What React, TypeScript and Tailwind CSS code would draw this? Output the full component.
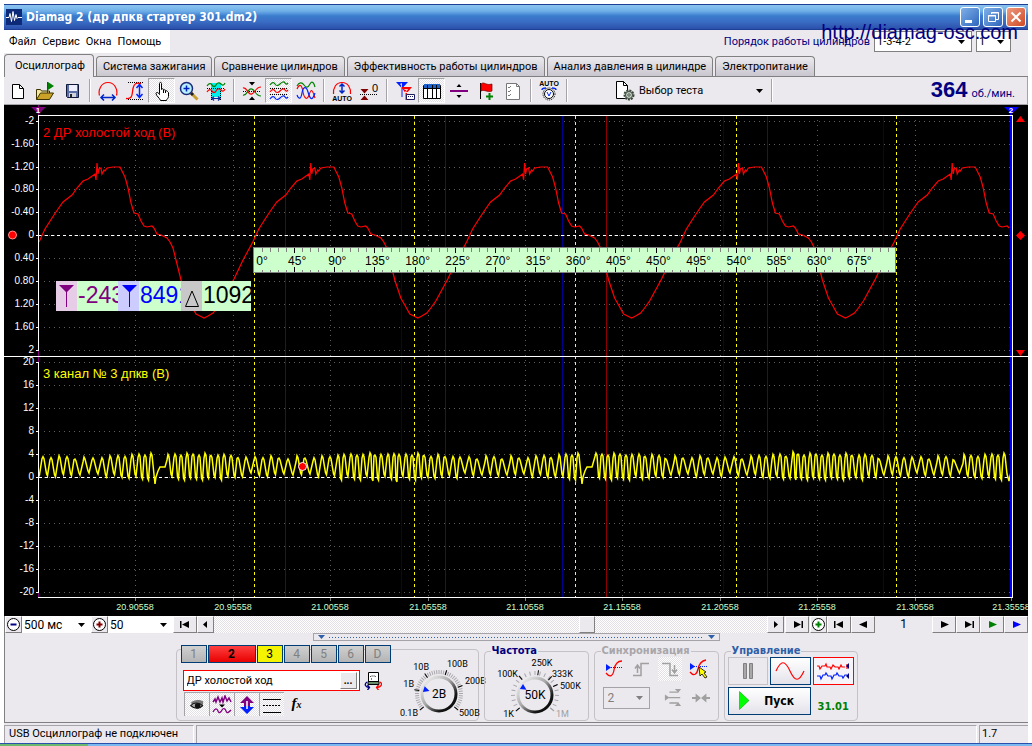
import { useState } from 'react';
import type { ReactNode } from 'react';
import clsx from 'clsx';

const DITHER = 'bg-[repeating-conic-gradient(#ffffff_0_25%,#e2e0e4_0_50%)] bg-[length:2px_2px]';
const BOLD = "font-['DejaVu_Sans_Condensed','DejaVu_Sans',sans-serif] font-bold";

const TABS = [
  'Осциллограф',
  'Система зажигания',
  'Сравнение цилиндров',
  'Эффективность работы цилиндров',
  'Анализ давления в цилиндре',
  'Электропитание',
];

/* ---------- toolbar icons ---------- */

function Icon({ children, className = 'size-5' }: { children: ReactNode; className?: string }) {
  return (
    <svg viewBox="0 0 20 20" className={clsx('shrink-0', className)} fill="none" aria-hidden="true">
      {children}
    </svg>
  );
}

const NewIcon = () => (
  <Icon>
    <path d="M4.500 3.500h7l4 4v10h-11z" fill="#fff" stroke="#000" />
    <path d="M11.500 3.500v4h4" stroke="#000" />
  </Icon>
);

const OpenIcon = () => (
  <Icon>
    <path d="M1.500 18.500v-10h4l1 1.500h8v3" fill="#f5e6a0" stroke="#3a3200" />
    <path d="M1.500 18.500l4-6.500h13l-4 6.500z" fill="#c9a227" stroke="#3a3200" />
    <path d="M12.500 12V1" stroke="#006400" />
    <path d="M13 1l6 4-6 4z" fill="#008000" />
  </Icon>
);

const SaveIcon = () => (
  <Icon>
    <path d="M4.500 3.500h12v13h-11l-1-1z" fill="#5a6ea5" stroke="#10183a" />
    <path d="M7 4h8v6H7z" fill="#eef" />
    <path d="M7 12h7v4H7z" fill="#cfd3dd" />
    <path d="M8 13h2v3H8z" fill="#222" />
  </Icon>
);

const WidthIcon = () => (
  <Icon>
    <path d="M1.500 14.500C0 9 3 1.500 10 1.500S20 9 18.500 14.500" stroke="#f00" strokeWidth="1.200" />
    <path d="M3 16.500h14M6 13.500l-3 3 3 3M14 13.500l3 3-3 3" stroke="#0026c8" strokeWidth="1.500" />
  </Icon>
);

const HeightIcon = () => (
  <Icon>
    <path d="M3 1.500h16M3 18.500h16" stroke="#000" strokeDasharray="1 1" />
    <path d="M1 17.500c7 1 6-5 7-10s3-6 8-5" stroke="#f00" strokeWidth="1.300" />
    <path d="M14.500 4v12M11.500 7l3-3.500 3 3.500M11.500 13l3 3.500 3-3.500" stroke="#0026ff" strokeWidth="1.500" />
  </Icon>
);

const HandIcon = () => (
  <Icon>
    <path
      d="M7.500 12.500v-10c0-1.500 2-1.500 2 0v6c0-1 2-1 2 0v1c0-1 2-1 2 0v1c0-1 2-1 2 0l1 1v4c0 2-2 2.500-2 4H8.500c-1-3-4-4-4.500-7 0-1.500 2-1.500 3.500 1z"
      fill="#fff"
      stroke="#000"
    />
    <path d="M11.500 9v3M13.500 10v2" stroke="#000" />
  </Icon>
);

const ZoomIcon = () => (
  <Icon>
    <path d="M12 12l6.500 6.500" stroke="#c8a030" strokeWidth="3" />
    <path d="M12 12l2 2" stroke="#222" strokeWidth="3" />
    <circle cx="7.500" cy="7.500" r="6" fill="#b8f0ff" stroke="#1a2a78" strokeWidth="1.500" />
    <path d="M4.500 7.500h6M7.500 4.500v6" stroke="#0020c0" strokeWidth="1.500" />
  </Icon>
);

const SpanIcon = () => (
  <Icon>
    <path d="M5 2h10v14H5z" fill="#00f0f0" />
    <path d="M1 7.500h18M5.500 10v9M14.500 10v9" stroke="#000" strokeDasharray="1 1" />
    <path d="M1 5c2-3 4-3 5-1s3 2 4 0 3-3 5-1 3 1 4-1" stroke="#008000" strokeWidth="1.300" />
    <path d="M1 11c2-3 4-3 5-1s3 2 4 0 3-3 5-1 3 1 4-1" stroke="#f00" strokeWidth="1.300" />
    <path d="M6 17.500h8M8 15.500l-2 2 2 2M12 15.500l2 2-2 2" stroke="#0026a0" strokeWidth="1.200" />
  </Icon>
);

const CenterIcon = () => (
  <Icon>
    <path d="M1 10.500h18" stroke="#000" strokeDasharray="1 1" />
    <path d="M7 1h6l-3 3.500zM7 19h6l-3-3.500z" fill="#000" />
    <path d="M1 14c3 1 4-3 6-5s4-1 6 2 3 4 6 4" stroke="#008000" strokeWidth="1.200" />
    <path d="M1 7c3-1 4 3 6 5s4 1 6-2 3-4 6-4" stroke="#f00" strokeWidth="1.200" />
  </Icon>
);

const LanesIcon = () => (
  <Icon>
    <path d="M1 4c2-3 4-3 5-1s3 2 5 0 4-3 5-1 2 1 3 0" stroke="#008000" strokeWidth="1.200" />
    <path d="M1 7.500h18M1 13.500h18" stroke="#000" strokeDasharray="1 1" />
    <path d="M1 11c2-3 4-3 5-1s3 2 5 0 4-3 5-1 2 1 3 0" stroke="#f00" strokeWidth="1.200" />
    <path d="M1 18c2-3 4-3 5-1s3 2 5 0 4-3 5-1 2 1 3 0" stroke="#0026ff" strokeWidth="1.200" />
  </Icon>
);

const OverlayIcon = () => (
  <Icon>
    <path d="M1 5c2-4 5-4 7-1s4 3 6-1 4-1 5 3" stroke="#008000" strokeWidth="1.200" />
    <path d="M1 8c3-7 5-3 6 3s4 9 6 3 3-7 6 3" stroke="#f00" strokeWidth="1.200" />
    <path d="M1 14c2 5 4 4 5-2s4-8 6-1 4 10 7 1" stroke="#0026ff" strokeWidth="1.200" />
  </Icon>
);

const AutoScaleIcon = () => (
  <Icon>
    <path d="M1.500 13C1 7 4 1.500 10 1.500S19 7 18.500 13" stroke="#f00" strokeWidth="1.200" />
    <path d="M10 3v9M7.500 5.500L10 3l2.500 2.500M7.500 9.500L10 12l2.500-2.500" stroke="#0026c8" strokeWidth="1.500" />
    <text x="10" y="19.500" textAnchor="middle" fill="#000" className="font-['Liberation_Sans'] text-[7px] font-bold">
      AUTO
    </text>
  </Icon>
);

const ZeroIcon = () => (
  <Icon>
    <path d="M1 13.500h18" stroke="#000" strokeDasharray="1 1" />
    <path d="M1.500 8h8l-4 4.500zM1.500 19h8l-4-4.500z" fill="#800000" />
    <text x="13" y="11" fill="#000" className="font-['Liberation_Sans'] text-[11px]">
      0
    </text>
  </Icon>
);

const CursorsIcon = () => (
  <Icon>
    <path d="M1 1h12L7.500 7v9h-1V7z" fill="#0020ff" />
    <path d="M6 6h11l-5 6v7h-1.500v-7z" fill="#f00" />
    <path d="M5 3.500l1.500-1v4M9.500 8.500h3l-2.500 3h3" stroke="#fff" strokeWidth="0.800" />
    <path d="M11.500 13.500h8v5h-8z" fill="#fff" stroke="#1a1a60" />
    <path d="M13 15.500h5" stroke="#1a1a60" strokeDasharray="1 1" />
  </Icon>
);

const TableIcon = () => (
  <Icon>
    <path d="M1.500 4.500h17v13h-17z" fill="#fff" stroke="#000" />
    <path d="M2 3h16v4H2z" fill="#1c62c8" />
    <path d="M1.500 7.500h17M5.500 4v14M10.500 4v14M14.500 4v14" stroke="#000" />
  </Icon>
);

const SplitIcon = () => (
  <Icon>
    <path d="M1 10h18" stroke="#800080" strokeWidth="2" />
    <path d="M7.500 6h5L10 3zM7.500 14h5L10 17z" fill="#000" />
  </Icon>
);

const FlagIcon = () => (
  <Icon>
    <path d="M4.500 2v16" stroke="#000" />
    <path d="M5 3c3-3 5 2 11 0v7c-5 2-7-2-11 0z" fill="#f00" stroke="#7a0000" strokeWidth="0.700" />
    <path d="M13.500 12v7M10 15.500h7" stroke="#008000" strokeWidth="2" />
  </Icon>
);

const ChecklistIcon = () => (
  <Icon>
    <path d="M3.500 2.500h10l3 3v13h-13z" fill="#fff" stroke="#777" />
    <path d="M5 6l1 1 2-2M5 10l1 1 2-2M5 14l1 1 2-2" stroke="#777" />
    <path d="M13.500 2.500v3h3" stroke="#777" />
  </Icon>
);

const AutoKnobIcon = () => (
  <Icon>
    <text x="10" y="5" textAnchor="middle" fill="#000" className="font-['Liberation_Sans'] text-[7px] font-bold">
      AUTO
    </text>
    <path d="M3 9c0-2 2-2 4-2M17 9c0-2-2-2-4-2" stroke="#0026ff" strokeWidth="1.500" />
    <circle cx="10" cy="13" r="6" stroke="#000" strokeDasharray="1 1" />
    <circle cx="10" cy="13" r="4.500" fill="#fff" stroke="#000" />
    <path d="M8 11l2 4 2-4" stroke="#0026ff" />
  </Icon>
);

const TestIcon = () => (
  <Icon className="size-5">
    <path d="M1.500 .500h7l4 4v13h-11z" fill="#fff" stroke="#000" />
    <path d="M8.500 .500v4h4" stroke="#000" />
    <circle cx="14" cy="14" r="4.500" fill="#b8c4b8" stroke="#3c4a3c" strokeWidth="2" strokeDasharray="2 1" />
    <circle cx="14" cy="14" r="3.500" fill="#c8d2c8" stroke="#3c4a3c" />
    <circle cx="14" cy="14" r="1.200" fill="#fff" stroke="#3c4a3c" />
  </Icon>
);

type Tool = { label: string; icon: ReactNode; pressed?: boolean };

const TOOL_GROUPS: Tool[][] = [
  [
    { label: 'Новый', icon: <NewIcon /> },
    { label: 'Открыть', icon: <OpenIcon /> },
    { label: 'Сохранить', icon: <SaveIcon /> },
  ],
  [
    { label: 'Масштаб по ширине', icon: <WidthIcon /> },
    { label: 'Масштаб по высоте', icon: <HeightIcon /> },
    { label: 'Перемещение', icon: <HandIcon />, pressed: true },
    { label: 'Лупа', icon: <ZoomIcon /> },
    { label: 'Интервал', icon: <SpanIcon /> },
  ],
  [
    { label: 'По центру', icon: <CenterIcon /> },
    { label: 'Раздельно', icon: <LanesIcon />, pressed: true },
    { label: 'Наложение', icon: <OverlayIcon /> },
  ],
  [
    { label: 'Автомасштаб', icon: <AutoScaleIcon /> },
    { label: 'Обнуление', icon: <ZeroIcon /> },
  ],
  [
    { label: 'Маркеры', icon: <CursorsIcon /> },
    { label: 'Таблица', icon: <TableIcon />, pressed: true },
    { label: 'Разделитель', icon: <SplitIcon /> },
    { label: 'Добавить флаг', icon: <FlagIcon /> },
    { label: 'Список', icon: <ChecklistIcon /> },
  ],
  [{ label: 'Автонастройка', icon: <AutoKnobIcon /> }],
];

const Separator = () => (
  <div className="flex w-[9px] shrink-0 justify-center py-px">
    <div className="w-0.5 border-r border-l border-r-white border-l-[#a5a3a8]" />
  </div>
);

/* ---------- header ---------- */

function TitleBar() {
  const winButton = 'flex size-5 items-center justify-center rounded-[3px] border border-white';
  return (
    <header className="flex h-[26px] items-center border-t border-b border-[#1d3f96] bg-[linear-gradient(#8cc4f0_0%,#6fb0e8_25%,#5797de_35%,#3b7dcd_45%,#3a6cc4_70%,#2b50ab_100%)] px-0.5">
      <svg viewBox="0 0 16 16" className="size-4 shrink-0" aria-hidden="true">
        <path d="M0 0h16v16H0z" fill="#0c2a78" />
        <path d="M0 8.500h3l1-4 1.500 8 1.500-10 1.500 9 1.500-6 1 4 1-1h4" fill="none" stroke="#fff" />
      </svg>
      <h1 className={clsx(BOLD, 'ml-1 flex-1 text-[12px] leading-5 text-white')}>Diamag 2 (др дпкв стартер 301.dm2)</h1>
      <div className="flex gap-[3px]">
        <button type="button" aria-label="Свернуть" className={clsx(winButton, 'bg-[linear-gradient(135deg,#7fb0e8,#2f66bd)]')}>
          <svg viewBox="0 0 16 16" className="size-4">
            <path d="M3 11h7v3H3z" fill="#fff" />
          </svg>
        </button>
        <button type="button" aria-label="Развернуть" className={clsx(winButton, 'bg-[linear-gradient(135deg,#7fb0e8,#2f66bd)]')}>
          <svg viewBox="0 0 16 16" className="size-4" fill="none" stroke="#fff">
            <path d="M6.500 5V3.500h7v7H11M6 4h8M3.500 6.500h7v6h-7zM3 7h8" />
          </svg>
        </button>
        <button type="button" aria-label="Закрыть" className={clsx(winButton, 'bg-[linear-gradient(135deg,#f09a80,#cf4a24)]')}>
          <svg viewBox="0 0 16 16" className="size-4" stroke="#fff" strokeWidth="2">
            <path d="M3.500 3.500l9 9M12.500 3.500l-9 9" />
          </svg>
        </button>
      </div>
    </header>
  );
}

function DropDown({ label, options, className, arrow = 'right-1.5' }: { label: string; options: string[]; className?: string; arrow?: string }) {
  return (
    <span className={clsx('relative flex items-center', className)}>
      <select aria-label={label} className="h-full w-full appearance-none bg-transparent pl-0.5 leading-4 outline-none">
        {options.map((o) => (
          <option key={o}>{o}</option>
        ))}
      </select>
      <svg viewBox="0 0 7 4" className={clsx('pointer-events-none absolute h-1 w-[7px]', arrow)} fill="currentColor" aria-hidden="true">
        <path d="M0 0h7L3.500 4z" />
      </svg>
    </span>
  );
}

function MenuBar() {
  return (
    <div className="relative flex h-[23px] items-center justify-between">
      <nav className="flex h-full w-[166px] items-center gap-1.5 bg-white pl-[5px]">
        {['Файл', 'Сервис', 'Окна', 'Помощь'].map((item) => (
          <button key={item} type="button">
            {item}
          </button>
        ))}
      </nav>
      <div className="flex items-center gap-1 pr-[17px]">
        <span className="text-[#000080]">Порядок работы цилиндров</span>
        <DropDown label="Порядок работы цилиндров" options={['1-3-4-2', '1-2-4-3']} className="h-[21px] w-[98px] border border-[#808080] bg-white" />
        <DropDown label="Цилиндр" options={['1', '2', '3', '4']} className="h-[21px] w-[35px] border border-[#808080] bg-white" />
      </div>
      <a
        href="http://diamag-osc.com"
        className="absolute -top-2.5 right-2.5 font-['Liberation_Sans',sans-serif] text-[20px] leading-6 text-[#000080]"
      >
        http://diamag-osc.com
      </a>
    </div>
  );
}

function TabBar() {
  const [active, setActive] = useState(TABS[0]);
  return (
    <div role="tablist" className="flex h-6 items-end gap-0.5 border-b border-[#808080]">
      {TABS.map((tab) => (
        <button
          key={tab}
          type="button"
          role="tab"
          aria-selected={tab === active}
          onClick={() => setActive(tab)}
          className={clsx(
            'rounded-t-[4px] border border-b-0 border-[#808080] whitespace-nowrap',
            tab === active ? '-mb-px h-[23px] bg-[#ebe9ed] pr-2 pl-2.5' : 'h-5 bg-[linear-gradient(#eceaee,#c9c6cf)] px-1.5',
          )}
        >
          {tab}
        </button>
      ))}
    </div>
  );
}

function Toolbar() {
  return (
    <div className="flex h-7 items-stretch border-r border-b border-[#a5a3a8] pt-px pb-px">
      {TOOL_GROUPS.map((group, i) => (
        <div key={i} className="flex">
          {group.map((tool) => (
            <button
              key={tool.label}
              type="button"
              aria-label={tool.label}
              className={clsx(
                'flex w-[27px] items-center justify-center',
                tool.pressed && ['border-t border-r border-b border-l border-[#a5a3a8] border-r-white border-b-white', DITHER],
              )}
            >
              {tool.icon}
            </button>
          ))}
          <Separator />
        </div>
      ))}
      <button type="button" className="ml-11 flex w-[152px] items-center gap-1">
        <TestIcon />
        <span className="flex-1 text-left">Выбор теста</span>
        <svg viewBox="0 0 7 4" className="mr-1 h-1 w-[7px]" aria-hidden="true">
          <path d="M0 0h7L3.500 4z" />
        </svg>
      </button>
      <Separator />
      <div className="flex flex-1 items-baseline justify-end gap-1 pr-3 text-[#000080]">
        <strong className="font-['Liberation_Sans',sans-serif] text-[22px] leading-6">364</strong>
        <span>об./мин.</span>
      </div>
    </div>
  );
}

/* ---------- scope screen ---------- */

const UPPER = [
  ['-2', 121], ['-1.60', 144], ['-1.20', 167], ['-0.80', 189], ['-0.40', 212], ['0', 235],
  ['0.40', 258], ['0.80', 281], ['1.20', 304], ['1.60', 327], ['2', 350],
] as const;

const LOWER = [
  ['20', 362], ['16', 385], ['12', 408], ['8', 431], ['4', 454], ['0', 477],
  ['-4', 500], ['-8', 523], ['-12', 546], ['-16', 569], ['-20', 592],
] as const;

const TIMES = [
  ['20.90558', 135], ['20.95558', 233], ['21.00558', 330], ['21.05558', 428], ['21.10558', 525],
  ['21.15558', 622], ['21.20558', 720], ['21.25558', 817], ['21.30558', 915], ['21.35558', 1011],
] as const;

// one engine cycle of the pressure sensor, repeated every CYCLE units
const CYCLE = 213.8;
const PRESSURE = [
  [39, 242], [45, 229], [52, 218], [58, 209], [63, 202], [72, 195], [77, 188], [83, 181], [88, 179], [95, 174],
  [96, 180], [97, 163], [98, 174], [99, 169], [101, 168], [102, 174], [104, 170], [105, 171], [107, 168], [113, 167],
  [120, 167], [122, 171], [125, 177], [128, 188], [131, 203], [134, 213], [138, 214], [141, 221], [144, 226],
  [147, 227], [152, 226], [154, 228], [157, 234], [161, 235], [167, 238], [170, 242], [173, 248], [176, 260],
  [181, 280], [184, 289], [187, 298], [191, 305], [196, 314], [200, 316], [204, 318], [208, 316], [213, 313],
  [217, 308], [222, 301], [228, 290], [234, 279], [243, 260],
];

const pressurePoints = [0, 1, 2, 3, 4]
  .flatMap((n) => PRESSURE.map(([x, y]) => [x + n * CYCLE, y]))
  .filter(([x]) => x <= 1011)
  .map(([x, y]) => `${x.toFixed(1)},${y}`)
  .join(' ');

// crankshaft sensor tooth peaks, split where the disc has its missing teeth
const TEETH = [
  [35, 43, 51, 59, 67, 75, 84, 93, 102, 110, 118, 125, 132, 139, 145, 151],
  [
    168, 175, 181, 187, 193, 199, 205, 211, 218, 224, 231, 238, 246, 255, 263, 271, 279, 288, 297, 305, 314, 322, 330,
    338, 344, 351, 357, 363, 370, 375, 381, 388, 394, 399, 406, 412, 418, 424, 431, 438, 445, 453, 460, 469, 477, 486,
    494, 502, 511, 519, 528, 536, 544, 551, 559, 566, 572, 578,
  ],
  [
    596, 602, 608, 614, 620, 626, 632, 639, 645, 652, 659, 666, 675, 683, 692, 700, 708, 717, 725, 734, 742, 751, 759,
    766, 773, 780, 786, 793, 798, 804, 810, 816, 822, 828, 834, 840, 846, 852, 859, 865, 872, 879, 888, 896, 904, 912,
    921, 929, 938, 946, 954, 964, 971, 978, 985, 992, 998, 1004,
  ],
];

function crankPoints() {
  const points: string[] = [];
  TEETH.forEach((teeth, n) => {
    teeth.forEach((x, i) => {
      const next = teeth[i + 1];
      const d = next ? next - x : 6;
      const top = 457 - (9 - d) * 1.3 + (i % 3);
      const bottom = 474 + (9 - d) * 1.7 + ((i * 7) % 3) - 1;
      if (x > 38) points.push(`${x},${top.toFixed(1)}`, `${x + 1},${(top + 2).toFixed(1)}`);
      if (!next) return;
      points.push(`${x + d / 2 - 0.5},${(bottom - 2).toFixed(1)}`, `${x + d / 2 + 0.5},${bottom.toFixed(1)}`);
      points.push(`${x + d - 1},${(top + 3).toFixed(1)}`);
    });
    if (n < 2) {
      const g = teeth[teeth.length - 1] + 4;
      points.push(`${g},484`, `${g + 1},477`, `${g + 3},471`, `${g + 5},467`, `${g + 10},467`, `${g + 12},460`);
    }
  });
  points.push('1007,474', '1009,481', '1011,472');
  return points.join(' ');
}

const crank = crankPoints();

function Readout({ x, width, tint, value, color, children }: { x: number; width: number; tint: string; value: string; color: string; children: ReactNode }) {
  return (
    <svg x={x} y={281} width={width} height={30} className="overflow-hidden">
      <rect width={width} height={30} fill="#ccffcc" />
      <rect width={21} height={30} fill={tint} />
      {children}
      <text x={22} y={22} fill={color} className="text-[23px]">
        {value}
      </text>
    </svg>
  );
}

function AngleRuler() {
  const step = 40.15;
  const ticks = Array.from({ length: 80 }, (_, i) => i).filter((i) => i > 0);
  return (
    <g>
      <rect x={253.5} y={247.5} width={642} height={25} fill="#ccffcc" stroke="#808080" />
      {ticks.map((i) => {
        const x = Math.round(254 + (i * step) / 5) + 0.5;
        const major = i % 5 === 0;
        return x < 895 ? (
          <path key={i} d={major ? `M${x} 248v5M${x} 267v5` : `M${x} 248v4M${x} 270v2`} stroke={major ? '#000' : '#808080'} />
        ) : null;
      })}
      {Array.from({ length: 16 }, (_, i) => (
        <text key={i} x={i === 0 ? 262 : 257 + i * step} y={265} textAnchor="middle" fill="#000" className="text-[12px]">
          {i * 45}°
        </text>
      ))}
    </g>
  );
}

function Scope() {
  return (
    <svg viewBox="4 105 1024 511" className="block w-full bg-black font-['Liberation_Sans',sans-serif]" role="img" aria-label="Осциллограмма">
      <g stroke="#5c5c5c" strokeDasharray="1 4">
        {[...UPPER, ...LOWER].map(([label, y]) => (
          <path key={`${label}${y}`} d={`M44 ${y + 0.5}H1010`} />
        ))}
        {TIMES.slice(0, -1).map(([label, x]) => (
          <path key={label} d={`M${x + 0.5} 120V597`} />
        ))}
      </g>
      {[285, 445, 767].map((x) => (
        <path key={x} d={`M${x + 0.5} 116V598`} stroke="#600000" />
      ))}
      {[401, 723, 883].map((x) => (
        <path key={x} d={`M${x + 0.5} 116V598`} stroke="#000068" />
      ))}
      <path d="M606.500 116V598" stroke="#8c0000" />
      <path d="M562.500 116V598" stroke="#000090" />
      <path d="M39 235.500H1011M39 477.500H1011" stroke="#fff" strokeDasharray="3 3" />
      {[254, 414, 575, 736, 896].map((x) => (
        <path key={x} d={`M${x + 0.5} 116V598`} stroke="#ffff00" strokeDasharray="3 3" />
      ))}

      <polyline points={pressurePoints} fill="none" stroke="#ff0000" strokeWidth="1.200" />
      <polyline points={crank} fill="none" stroke="#ffff00" strokeWidth="1.500" />

      <path d="M38.500 105V598" stroke="#800080" />
      <path d="M1011 112V598" stroke="#0000ff" strokeWidth="2" />
      <path d="M38.500 115V350M38.500 362V592M39 115.500H1012M4 356.500H1028M38 597.500H1012M1012.500 115V598" stroke="#fff" />
      <g fill="#fff" className="text-[10px]">
        {[...UPPER, ...LOWER].map(([label, y]) => (
          <g key={`${label}${y}`}>
            <path d={`M36 ${y + 0.5}h3`} stroke="#fff" />
            <text x={34} y={y + 3} textAnchor="end">
              {label}
            </text>
          </g>
        ))}
      </g>
      <g fill="#ccffcc" className="text-[9px]">
        {TIMES.map(([label, x]) => (
          <g key={label}>
            <path d={`M${x + 0.5} 598v3`} stroke="#808080" />
            <text x={x} y={610} textAnchor="middle">
              {label}
            </text>
          </g>
        ))}
      </g>
      <text x={43} y={137} fill="#ff0000" className="text-[13px]">
        2 ДР холостой ход (В)
      </text>
      <text x={43} y={378} fill="#ffff00" className="text-[13px]">
        3 канал № 3 дпкв (В)
      </text>

      <path d="M31 107h15l-7.500 7z" fill="#800080" />
      <path d="M1004 107h15l-7.500 7z" fill="#0000ff" />
      <g fill="#fff" textAnchor="middle" className="text-[8px] font-bold">
        <text x={38} y={113}>1</text>
        <text x={1011} y={113}>2</text>
      </g>
      <path d="M1016 122l4.500-6 4.500 6zM1016 235.500l4.500-4.500 4.500 4.500-4.500 4.500zM1016 350h9l-4.500 6z" fill="#f00" />
      <circle cx={12.5} cy={235} r={4} fill="#f00" stroke="#ff9090" />
      <circle cx={302.5} cy={466.5} r={4} fill="#f00" stroke="#fff" />

      <AngleRuler />
      <Readout x={56} width={63} tint="#e6cce6" value="-243" color="#800080">
        <path d="M3 4h15l-7 7v15h-1V11z" fill="#800080" />
      </Readout>
      <Readout x={118} width={63} tint="#ccccff" value="8491" color="#0000ff">
        <path d="M4 4h15l-7 7v15h-1V11z" fill="#0000ff" />
      </Readout>
      <Readout x={181} width={70} tint="#c8c8c8" value="1092" color="#000">
        <path d="M4.500 25.500h13L11 10z" fill="none" stroke="#000" />
      </Readout>
    </svg>
  );
}

/* ---------- navigation strip ---------- */

const RAISED = 'border border-t-white border-l-white border-r-[#808080] border-b-[#808080] bg-[#ebe9ed]';

function NavButton({ label, d, color = '#000', className }: { label: string; d: string; color?: string; className: string }) {
  return (
    <button type="button" aria-label={label} className={clsx('flex shrink-0 items-center justify-center', RAISED, className)}>
      <svg viewBox="0 0 11 9" className="h-[9px] w-[11px]" fill={color} aria-hidden="true">
        <path d={d} />
      </svg>
    </button>
  );
}

function RoundButton({ label, color, plus }: { label: string; color: string; plus?: boolean }) {
  return (
    <button type="button" aria-label={label} className={clsx('flex w-[17px] shrink-0 items-center justify-center', RAISED)}>
      <svg viewBox="0 0 13 13" className="size-[13px]" fill="none" aria-hidden="true">
        <circle cx="6.500" cy="6.500" r="6" fill="#fff" stroke="#000" />
        <path d={plus ? 'M3.500 6.500h6M6.500 3.500v6' : 'M3.500 6.500h6'} stroke={color} strokeWidth="2" />
      </svg>
    </button>
  );
}

const FIRST = 'M0 1h1.500v7H0zM9 1v7L2 4.500z';
const LAST = 'M9.500 1H11v7H9.500zM2 1v7l7-3.500z';
const FORWARD = 'M2 1v7l8-3.500z';
const BACK = 'M9 1v7L1 4.500z';

function NavStrip() {
  return (
    <div className="flex h-[17px] bg-[#ebe9ed]">
      <RoundButton label="Уменьшить развертку" color="#000080" />
      <DropDown label="Развертка" options={['500 мс', '200 мс', '100 мс']} className="w-[69px] bg-white text-[12px]" />
      <RoundButton label="Увеличить развертку" color="#800000" plus />
      <DropDown label="Масштаб" options={['50', '100']} className="w-[65px] bg-white text-[12px]" />
      <NavButton label="В начало" d={FIRST} className="w-6" />
      <NavButton label="Влево" d="M7 1v7L3 4.500z" className="w-[17px]" />
      <div className={clsx('flex flex-1', DITHER)}>
        <div className="w-[66%]" />
        <div className={clsx('w-4', RAISED)} />
      </div>
      <NavButton label="Вправо" d="M4 1v7l4-3.500z" className="w-[17px]" />
      <NavButton label="В конец" d={LAST} className="mx-px w-6" />
      <RoundButton label="Добавить кадр" color="#008000" plus />
      <NavButton label="Первый кадр" d={FIRST} className="w-6" />
      <NavButton label="Предыдущий кадр" d={BACK} className="w-6" />
      <output className="w-[57px] text-center text-[12px] leading-4">1</output>
      <NavButton label="Следующий кадр" d={FORWARD} className="w-6" />
      <NavButton label="Последний кадр" d={LAST} className="w-6" />
      <NavButton label="Воспроизвести" d={FORWARD} color="#008000" className="w-6" />
      <NavButton label="Просмотр" d={FORWARD} color="#0000ff" className="w-6" />
    </div>
  );
}

/* ---------- control panels ---------- */

type Mark = { text: string; x: number; y: number; angle: number; anchor?: 'start' | 'middle' | 'end'; dim?: boolean };

function Knob({ label, value, marks, pointer, ticks, className }: { label: string; value: string; marks: Mark[]; pointer: number; ticks: number; className?: string }) {
  const ring = Array.from({ length: ticks + 1 }, (_, i) => -130 + (i * 260) / ticks);
  return (
    <svg viewBox="-48 -38 96 62" className={clsx('h-[62px] w-24 overflow-visible', className)} role="img" aria-label={`${label}: ${value}`}>
      <defs>
        <linearGradient id={`rim-${value}`} x1="0" y1="0" x2="1" y2="1">
          <stop offset="0" stopColor="#ffffff" />
          <stop offset="0.450" stopColor="#a8a8a8" />
          <stop offset="0.750" stopColor="#181818" />
          <stop offset="1" stopColor="#000" />
        </linearGradient>
      </defs>
      {ring.map((a) => (
        <path key={a} d="M0 -20v-4" transform={`rotate(${a})`} stroke="#a8a6aa" />
      ))}
      {marks.map((m) => (
        <g key={m.text}>
          <path d="M0 -20v-5" transform={`rotate(${m.angle})`} stroke={m.dim ? '#a0a0a0' : '#000'} />
          <text x={m.x} y={m.y} textAnchor={m.anchor ?? 'start'} fill={m.dim ? '#a0a0a0' : '#000'} className="text-[9px]">
            {m.text}
          </text>
        </g>
      ))}
      <circle r="17" fill="#ebe9ed" stroke={`url(#rim-${value})`} strokeWidth="3" />
      <path d="M-3 -16h6L0 -10z" transform={`rotate(${pointer})`} fill="#0020ff" />
      <text y="4" textAnchor="middle" className="text-[12px]">
        {value}
      </text>
    </svg>
  );
}

const VOLT_MARKS: Mark[] = [
  { text: '0.1В', x: -21, y: 22, angle: -130, anchor: 'end' },
  { text: '1В', x: -25, y: -7, angle: -80, anchor: 'end' },
  { text: '10В', x: -10, y: -24, angle: -35, anchor: 'end' },
  { text: '100В', x: 8, y: -27, angle: 18 },
  { text: '200В', x: 26, y: -10, angle: 70 },
  { text: '500В', x: 20, y: 22, angle: 130 },
];

const FREQ_MARKS: Mark[] = [
  { text: '1K', x: -21, y: 22, angle: -130, anchor: 'end' },
  { text: '100K', x: -17, y: -18, angle: -40, anchor: 'end' },
  { text: '250K', x: 7, y: -29, angle: 8, anchor: 'middle' },
  { text: '333K', x: 17, y: -18, angle: 42 },
  { text: '500K', x: 25, y: -6, angle: 65 },
  { text: '1M', x: 21, y: 22, angle: 130, dim: true },
];

function Group({ title, tone, className, children }: { title: string; tone: string; className: string; children: ReactNode }) {
  return (
    <fieldset className={clsx('h-[76px] rounded-[4px] border border-[#c4c2c7]', className)}>
      <legend className={clsx(BOLD, 'ml-1.5 px-px text-[11px] leading-3', tone)}>{title}</legend>
      {children}
    </fieldset>
  );
}

function ChannelPanel() {
  const [active, setActive] = useState('2');
  const [name, setName] = useState('ДР холостой ход');
  const pressed = clsx('flex h-6 w-[25px] items-center justify-center border-t border-l border-[#a5a3a8]', DITHER);
  return (
    <section className="mt-1 flex h-[72px] w-[303px] justify-between rounded-[4px] border border-[#c4c2c7] pl-1">
      <div className="-mt-[5px] flex flex-col">
        <div className="flex gap-px">
          {['1', '2', '3', '4', '5', '6', 'D'].map((ch) => (
            <button
              key={ch}
              type="button"
              aria-pressed={ch === active}
              onClick={() => setActive(ch)}
              className={clsx(
                'flex h-[18px] items-center justify-center border border-[#003c74] text-[12px]',
                ch === active ? 'w-12 font-bold' : 'w-[26px]',
                ch === '2' && 'bg-[linear-gradient(#ff4040,#e80000)]',
                ch === '3' && 'bg-[#f4f400]',
                ch !== '2' && ch !== '3' && 'bg-[linear-gradient(#d0d0d0,#b4b4b4)] text-[#808080]',
              )}
            >
              {ch}
            </button>
          ))}
        </div>
        <div className="mt-[7px] ml-0.5 flex items-center gap-1">
          <div className="flex h-[21px] w-[177px] items-center border border-[#f00] bg-white pr-0.5 pl-[3px]">
            <input aria-label="Название канала" value={name} onChange={(e) => setName(e.target.value)} className="w-full min-w-0 flex-1 outline-none" />
            <button type="button" aria-label="Выбрать датчик" className={clsx('h-[17px] w-[17px] text-[10px] leading-3 font-bold', RAISED)}>
              ...
            </button>
          </div>
          <button type="button" aria-label="Инвертировать">
            <svg viewBox="0 0 18 18" className="size-[18px]" fill="none" aria-hidden="true">
              <path d="M4.500 .500h10v9h-10z" fill="#fff" stroke="#000" />
              <path d="M6 5l1-1h4l1 1M7 7h1" stroke="#000" strokeDasharray="1 1" />
              <path d="M4 9.500h11v3H4z" fill="#6a8a6a" stroke="#000" />
              <path d="M3 10c-3 2-2 5 2 5.500M3.500 13l2 2.500-2 2.500" stroke="#000080" strokeWidth="1.300" />
              <path d="M16 10c3 2 1 5-3 5.500M14.500 13l-2 2.500 2 2.500" stroke="#f00" strokeWidth="1.300" />
            </svg>
          </button>
        </div>
        <div className="mt-px ml-[3px] flex">
          <button type="button" aria-label="Показать канал" className={pressed}>
            <Icon className="size-3.5">
              <path d="M1 7c5-5 12-5 18-2l-1 7H8z" fill="#777" />
              <path d="M1 11c4-5 12-5 17 0-4 5-12 5-17 0z" fill="#aaa" stroke="#111" strokeWidth="1.500" />
              <circle cx="11" cy="11" r="4" fill="#111" />
            </Icon>
          </button>
          <button type="button" aria-label="Сглаживание" className={pressed}>
            <Icon>
              <path d="M1 7l2-3 1 3 2-5 2 5 2-4 1 4 2-6 2 5 2-3 2 4" stroke="#800080" strokeWidth="1.500" />
              <path d="M7 9.500h6l-3 3z" fill="#000" />
              <path d="M1 17c2-4 4-4 5-1s3 1 4-1 3-2 4 1 3 1 5-1" stroke="#800080" strokeWidth="1.300" />
            </Icon>
          </button>
          <button type="button" aria-label="Сдвиг" className={pressed}>
            <Icon>
              <path d="M10 1l7 7h-4v3H7V8H3z" fill="#800080" />
              <path d="M10 19l7-7h-4v-1H7v1H3z" fill="#0020ff" />
              <path d="M10 6v8" stroke="#fff" strokeWidth="1.500" />
            </Icon>
          </button>
          <button type="button" aria-label="Уровни" className={pressed}>
            <Icon>
              <path d="M1 4.500h18M1 17.500h18" stroke="#000" />
              <path d="M1 10.500h18" stroke="#000" strokeDasharray="2 1" />
            </Icon>
          </button>
          <button type="button" className="ml-2 font-['Liberation_Serif',serif] text-[15px] leading-5 font-bold italic">
            f<span className="text-[10px]">x</span>
          </button>
        </div>
      </div>
      <Knob label="Диапазон" value="2В" marks={VOLT_MARKS} pointer={-72} ticks={44} className="mt-1.5 mr-1" />
    </section>
  );
}

function SyncPanel() {
  return (
    <Group title="Синхронизация" tone="text-[#a8a6aa]" className="w-[125px]">
      <div className="flex items-center justify-between px-[9px]">
        <Icon>
          <path d="M3 8.500h16" stroke="#0020ff" strokeDasharray="1 1" />
          <path d="M2 5v7l5-3.500z" fill="#0020ff" />
          <path d="M2 14c4 5 7 3 8-3s3-9 8-9" stroke="#f00" strokeWidth="1.300" />
        </Icon>
        <Icon>
          <path d="M2 16.500h8v-12h8" stroke="#a0a0a0" strokeWidth="1.500" />
          <path d="M6.500 14V7M4 9.500L6.500 6 9 9.500" stroke="#a0a0a0" strokeWidth="1.500" />
        </Icon>
        <span className={clsx('flex size-6 items-center justify-center', DITHER)}>
          <Icon>
            <path d="M2 4.500h8v12h8" stroke="#a0a0a0" strokeWidth="1.500" />
            <path d="M14.500 6v7M12 10.500l2.500 3.500 2.500-3.500" stroke="#a0a0a0" strokeWidth="1.500" />
          </Icon>
        </span>
        <Icon>
          <path d="M3 7.500h16" stroke="#0020ff" strokeDasharray="1 1" />
          <path d="M1 4v7l5-3.500z" fill="#0020ff" />
          <path d="M1 13c4 5 7 2 8-3s3-8 8-9" stroke="#f00" strokeWidth="1.300" />
          <path d="M10 8l7 5-2 1 3 4-2 1-3-4-2 2z" fill="#ff0" stroke="#000" strokeWidth="0.800" />
        </Icon>
      </div>
      <div className="mt-1.5 flex items-center gap-3.5 pl-2">
        <DropDown label="Канал синхронизации" options={['2', '3']} className="h-[22px] w-[47px] border border-[#a5a3a8] pl-0.5 text-[12px] text-[#808080]" />
        <Icon className="size-[18px]">
          <path d="M6 3.500h10M6 15.500h10M5 9.500h13" stroke="#a0a0a0" strokeWidth="1.500" />
          <path d="M1 6v7l5-3.500zM12 0h7l-3 4zM12 19h7l-3-4z" fill="#a0a0a0" />
        </Icon>
        <Icon className="-ml-1 size-[18px]">
          <path d="M0 10h5M15 10h5" stroke="#a0a0a0" strokeWidth="2" />
          <path d="M4 5v10l6-5zM16 5v10l-6-5z" fill="#a0a0a0" />
        </Icon>
      </div>
    </Group>
  );
}

function ControlPanel() {
  return (
    <Group title="Управление" tone="text-[#2f5fa8]" className="w-[134px]">
      <div className="grid grid-cols-3 gap-x-0.5 gap-y-[2px] px-[3px]">
        <button type="button" aria-label="Пауза" className="flex h-7 items-center justify-center border border-[#c4c2c7]">
          <Icon className="size-5">
            <path d="M5.500 2.500h3v15h-3zM11.500 2.500h3v15h-3z" fill="#a8a8a8" stroke="#808080" />
          </Icon>
        </button>
        <button type="button" aria-label="Однократно" className="flex h-7 items-center justify-center border border-[#003c74] bg-[linear-gradient(#ffffff,#e4e2ea)]">
          <svg viewBox="0 0 30 20" className="h-5 w-[30px]" fill="none">
            <path d="M1 10C6-1 10-1 15 10s9 11 14 0" stroke="#f00" strokeWidth="1.200" />
          </svg>
        </button>
        <button type="button" aria-label="Непрерывно" className="flex h-7 items-center justify-center border border-[#f00] bg-[#f6f4f8]">
          <svg viewBox="0 0 34 20" className="h-5 w-[34px]" fill="none">
            <path d="M1 5h2l1 3 2-3h3l1-2 1 3h3l1 2 2-4 2 2h3l1 2 2-4 1 2h3M31 3v5" stroke="#f00" strokeWidth="1.200" />
            <path d="M1 15h3l1 3 2-4h2l1-2 2 3h3l1 3 2-4h2l1-2 2 3h3l1 2 2-3h2" stroke="#0020ff" strokeWidth="1.200" />
            <path d="M33 2v6l-3-3zM33 12v6l-3-3z" fill="#000080" />
          </svg>
        </button>
        <button type="button" className={clsx(BOLD, 'col-span-2 flex h-7 items-center border border-[#003c74] bg-[linear-gradient(#ffffff,#e4e2ea)] pl-2.5')}>
          <svg viewBox="0 0 10 20" className="h-5 w-2.5" aria-hidden="true">
            <path d="M.500 .500v18l9.500-9z" fill="#0f0" stroke="#0a8a0a" strokeWidth="0.500" />
          </svg>
          <span className="flex-1 text-center text-[12px]">Пуск</span>
        </button>
        <output className={clsx(BOLD, 'self-end text-center text-[11px] leading-4 text-[#008000]')}>31.01</output>
      </div>
    </Group>
  );
}

function StatusBar() {
  return (
    <footer className="flex h-[21px] gap-0.5 border-t border-[#808080] pt-0.5">
      <div className="w-[190px] border-t border-r border-l border-[#a5a3a8] border-r-white pl-1 leading-4">USB Осциллограф не подключен</div>
      <div className="flex-1 border-t border-r border-l border-[#a5a3a8] border-r-white" />
      <div className="w-[49px] border-t border-l border-[#a5a3a8] pl-0.5 leading-4">1.7</div>
    </footer>
  );
}

export default function App() {
  return (
    <div className="bg-white px-1 pt-1 font-['Roboto',sans-serif] text-[11px] leading-4 text-black">
      <div className="flex flex-col bg-[#ebe9ed]">
        <TitleBar />
        <MenuBar />
        <TabBar />
        <Toolbar />
        <main className="border-l border-[#808080]">
          <div className="-ml-px">
            <Scope />
          </div>
          <NavStrip />
          <div className="mx-auto flex h-2 w-[407px] items-center gap-1 border border-[#a5a3a8] px-1">
            <svg viewBox="0 0 7 4" className="h-1 w-[7px]" fill="#2f5fa8" aria-hidden="true">
              <path d="M0 0h7L3.500 4z" />
            </svg>
            <div className="h-px flex-1 bg-[repeating-linear-gradient(90deg,#2f5fa8_0_1px,transparent_1px_3px)]" />
            <svg viewBox="0 0 7 4" className="h-1 w-[7px]" fill="#2f5fa8" aria-hidden="true">
              <path d="M0 0h7L3.500 4z" />
            </svg>
          </div>
          <div className="flex justify-center gap-[5px] pt-1 pb-px">
            <ChannelPanel />
            <Group title="Частота" tone="text-[#000080]" className="w-[105px]">
              <Knob label="Частота" value="50K" marks={FREQ_MARKS} pointer={-58} ticks={20} className="ml-0.5" />
            </Group>
            <SyncPanel />
            <ControlPanel />
          </div>
        </main>
        <StatusBar />
      </div>
      <div className="-mx-1 h-[3px] border-t border-[#2b50ab] bg-[linear-gradient(90deg,#6cb86c_0_88px,#7ab8f0_88px)]" />
    </div>
  );
}
